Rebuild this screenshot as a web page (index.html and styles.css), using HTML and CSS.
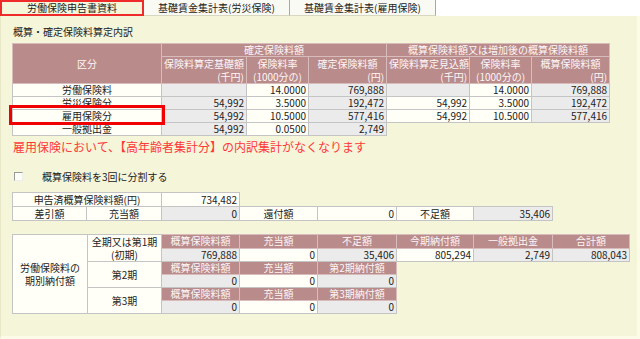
FILE: index.html
```html
<!DOCTYPE html>
<html lang="ja">
<head>
  <meta charset="UTF-8">
  <title>労働保険申告書資料</title>
  <link rel="stylesheet" href="styles.css">
</head>
<body>
  <div class="tabs">
    <div class="tab active">労働保険申告書資料</div>
    <div class="tab">基礎賃金集計表(労災保険)</div>
    <div class="tab">基礎賃金集計表(雇用保険)</div>
  </div>

  <div class="panel">
    <div class="section-title">概算・確定保険料算定内訳</div>

    <table class="grid calc">
      <colgroup>
        <col style="width:149px"><col style="width:85px"><col style="width:62px"><col style="width:78px">
        <col style="width:83px"><col style="width:62px"><col style="width:78px">
      </colgroup>
      <tr class="h1">
        <th rowspan="2" class="kubun">区分</th>
        <th colspan="3">確定保険料額</th>
        <th colspan="3">概算保険料額又は増加後の概算保険料額</th>
      </tr>
      <tr class="h2">
        <th><div>保険料算定基礎額</div><div class="r">(千円)</div></th>
        <th><div>保険料率</div><div>(1000分の)</div></th>
        <th><div>確定保険料額</div><div class="r">(円)</div></th>
        <th><div>保険料算定見込額</div><div class="r">(千円)</div></th>
        <th><div>保険料率</div><div>(1000分の)</div></th>
        <th><div>概算保険料額</div><div class="r">(円)</div></th>
      </tr>
      <tr>
        <td class="c">労働保険料</td>
        <td class="g"></td>
        <td>14.0000</td>
        <td class="g">769,888</td>
        <td class="g"></td>
        <td>14.0000</td>
        <td class="g">769,888</td>
      </tr>
      <tr>
        <td class="c">労災保険分</td>
        <td class="g">54,992</td>
        <td>3.5000</td>
        <td class="g">192,472</td>
        <td>54,992</td>
        <td>3.5000</td>
        <td class="g">192,472</td>
      </tr>
      <tr>
        <td class="c mark-cell">雇用保険分<span class="mark"></span></td>
        <td class="g">54,992</td>
        <td>10.5000</td>
        <td class="g">577,416</td>
        <td>54,992</td>
        <td>10.5000</td>
        <td class="g">577,416</td>
      </tr>
      <tr>
        <td class="c">一般拠出金</td>
        <td class="g">54,992</td>
        <td>0.0500</td>
        <td class="g">2,749</td>
        <td colspan="3" class="blank"></td>
      </tr>
    </table>

    <p class="notice">雇用保険において、【高年齢者集計分】の内訳集計がなくなります</p>

    <label class="split">
      <span class="box"></span>
      <span>概算保険料を3回に分割する</span>
    </label>

    <table class="grid summary">
      <colgroup>
        <col style="width:74px"><col style="width:75px"><col style="width:78px"><col style="width:78px">
        <col style="width:79px"><col style="width:77px"><col style="width:79px">
      </colgroup>
      <tr>
        <td colspan="2" class="c">申告済概算保険料額(円)</td>
        <td>734,482</td>
        <td colspan="4" class="blank"></td>
      </tr>
      <tr>
        <td class="c">差引額</td>
        <td class="c">充当額</td>
        <td class="g">0</td>
        <td class="c">還付額</td>
        <td>0</td>
        <td class="c">不足額</td>
        <td class="g">35,406</td>
      </tr>
    </table>

    <table class="grid periods">
      <colgroup>
        <col style="width:75px"><col style="width:74px"><col style="width:78px"><col style="width:78px">
        <col style="width:79px"><col style="width:77px"><col style="width:79px"><col style="width:77px">
      </colgroup>
      <tr>
        <td rowspan="6" class="c lead">労働保険料の<br>期別納付額</td>
        <td rowspan="2" class="c period">全期又は第1期<br>(初期)</td>
        <th>概算保険料額</th>
        <th>充当額</th>
        <th>不足額</th>
        <th>今期納付額</th>
        <th>一般拠出金</th>
        <th>合計額</th>
      </tr>
      <tr>
        <td class="g">769,888</td>
        <td>0</td>
        <td class="g">35,406</td>
        <td>805,294</td>
        <td class="g">2,749</td>
        <td class="g">808,043</td>
      </tr>
      <tr>
        <td rowspan="2" class="c period">第2期</td>
        <th>概算保険料額</th>
        <th>充当額</th>
        <th>第2期納付額</th>
        <td colspan="3" rowspan="2" class="blank"></td>
      </tr>
      <tr>
        <td class="g">0</td>
        <td>0</td>
        <td class="g">0</td>
      </tr>
      <tr>
        <td rowspan="2" class="c period">第3期</td>
        <th>概算保険料額</th>
        <th>充当額</th>
        <th>第3期納付額</th>
        <td colspan="3" rowspan="2" class="blank"></td>
      </tr>
      <tr>
        <td class="g">0</td>
        <td>0</td>
        <td class="g">0</td>
      </tr>
    </table>
  </div>
</body>
</html>
```

FILE: styles.css
```css
body {
  margin: 0;
  font-family: "Noto Sans CJK JP", "Noto Sans", sans-serif;
  font-size: 11px;
  color: #222;
  background: #ffffff;
  width: 640px;
  height: 339px;
  overflow: hidden;
}

/* tab strip */
.tabs {
  display: flex;
  height: 16px;
  background: #ffffff;
}
.tab {
  width: 146px;
  line-height: 15px;
  text-align: center;
  font-size: 10px;
  background: #fafaf4;
  border-right: 1px solid #a8a8a8;
  border-bottom: 1px solid #d8d8c0;
  box-sizing: border-box;
}
.tab.active {
  width: 144px;
  background: #f5f5da;
  border: 2px solid #ee2a2a;
  line-height: 12px;
}

/* main panel */
.panel {
  background: #f5f5da;
  height: 323px;
  box-sizing: border-box;
  padding: 0 0 0 11px;
  border-right: 3px solid #fbfbe8;
  border-bottom: 3px solid #fbfbe8;
  border-left: 1px solid #e8e8c8;
}
.section-title {
  padding: 9px 0 0 1px;
  height: 18px;
  line-height: 14px;
  font-size: 10px;
}

/* shared table look */
.grid {
  border-collapse: collapse;
  table-layout: fixed;
  font-size: 10px;
}
.grid th,
.grid td {
  padding: 0 2px;
  height: 12px;
  line-height: 12px;
  border: 1px solid #c4c4c4;
  font-weight: normal;
  white-space: nowrap;
  overflow: hidden;
}
.grid th {
  background: #b98b8b;
  color: #fff6f6;
  text-align: center;
  border-color: #d8bcbc;
}
.grid td {
  background: #fffff7;
  text-align: right;
}
.grid td.c {
  text-align: center;
}
.grid td.g {
  background: #ebebeb;
}
.grid td.blank {
  background: transparent;
  border: none;
}

/* 概算・確定 table */
.calc {
  width: 597px;
}
.calc .h1 th {
  height: 11px;
  line-height: 12px;
  overflow: visible;
}
.calc .h2 th {
  height: 26px;
  line-height: 13px;
}
.calc .h2 .r {
  text-align: right;
}
.calc th.kubun {
  vertical-align: middle;
}
.grid td.mark-cell {
  position: relative;
  overflow: visible;
}
.mark {
  position: absolute;
  left: -4px;
  top: -5px;
  right: -4px;
  bottom: -3px;
  border: 3px solid #f00000;
}

.notice {
  margin: 3px 0 0 1px;
  font-size: 12px;
  line-height: 16px;
  color: #ff3838;
}

.split {
  display: flex;
  align-items: center;
  gap: 19px;
  margin: 14px 0 0 2px;
  height: 14px;
  font-size: 10px;
}
.split .box {
  width: 7px;
  height: 7px;
  border: 1px solid #9a9a9a;
  background: #fdfdf8;
  border-right-color: #eee;
  border-bottom-color: #eee;
}

.summary {
  margin-top: 9px;
  width: 540px;
}
.summary td {
  height: 13px;
}

.periods {
  margin-top: 13px;
  width: 617px;
}
.periods td.lead,
.periods td.period {
  vertical-align: middle;
  line-height: 13px;
  background: #fffff7;
}
```
